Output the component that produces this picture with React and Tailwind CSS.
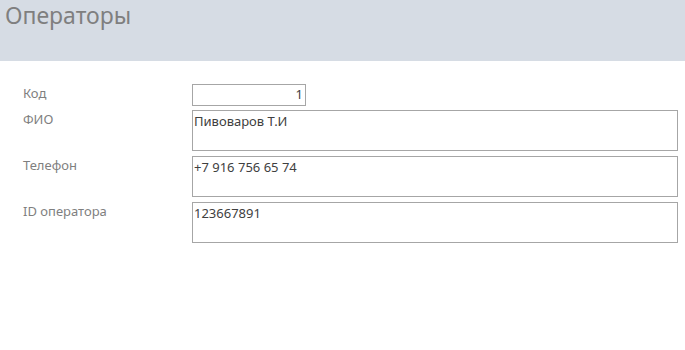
export default function App() {
  const rows = [
    { label: 'ФИО', value: 'Пивоваров Т.И' },
    { label: 'Телефон', value: '+7 916 756 65 74' },
    { label: 'ID оператора', value: '123667891' },
  ];

  return (
    <div className="w-[685px] h-[350px] bg-white font-['Noto_Sans',sans-serif]">
      <header className="h-[61px] bg-[#d6dce4] pl-[5px]">
        <h1 className="text-[23px] leading-[31px] text-[#7f7f7f]">Операторы</h1>
      </header>

      <main className="flex flex-col pt-[23px]">
        <div className="flex h-[22px]">
          <label className="w-[192px] pl-[23px] text-[13px] leading-[18px] text-[#7f7f7f]">
            Код
          </label>
          <div className="w-[114px] border border-[#a6a6a6] pr-[2px] text-right text-[13px] leading-[19px] text-[#404040]">
            1
          </div>
        </div>

        <div className="mt-[4px] flex flex-col gap-[5px]">
          {rows.map(row => (
            <div key={row.label} className="flex h-[41px]">
              <label className="w-[192px] pl-[23px] text-[13px] leading-[18px] text-[#7f7f7f]">
                {row.label}
              </label>
              <div className="w-[486px] border border-[#a6a6a6] pl-[1px] pt-[1px] text-[13px] leading-[18px] text-[#404040]">
                {row.value}
              </div>
            </div>
          ))}
        </div>
      </main>
    </div>
  );
}
